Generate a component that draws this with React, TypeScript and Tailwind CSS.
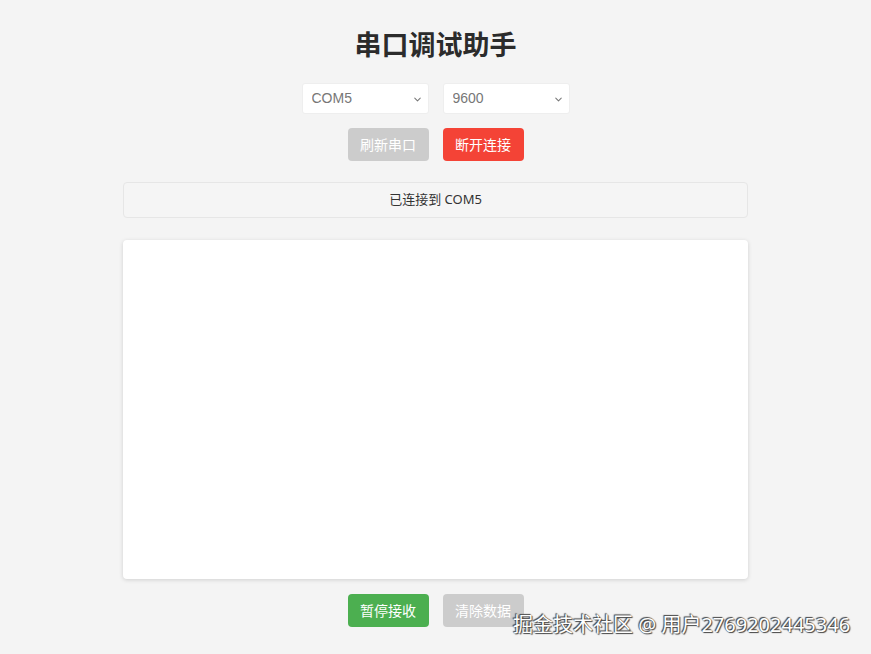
import { ChevronDown } from 'lucide-react';

const font = { fontFamily: '"Noto Sans", "Noto Sans CJK SC", sans-serif' };

function Select({ value, options }: { value: string; options: string[] }) {
  return (
    <div className="relative w-[127px] h-[31px]">
      <select
        defaultValue={value}
        className="appearance-none w-full h-full bg-white border border-[#eeeeee] rounded-[3px] pl-[9px] text-[14px] text-[#777777] outline-none"
        style={{ fontFamily: '"Liberation Sans", Arial, sans-serif' }}
      >
        {options.map((o) => (
          <option key={o}>{o}</option>
        ))}
      </select>
      <ChevronDown className="absolute right-[6px] top-[11px] w-[11px] h-[11px] text-[#777777] pointer-events-none" strokeWidth={2.2} />
    </div>
  );
}

function Btn({ label, color }: { label: string; color: string }) {
  return (
    <button className={`w-[81px] h-[33px] rounded-[4px] text-white text-[14px] ${color}`}>
      {label}
    </button>
  );
}

export default function App() {
  return (
    <div className="relative min-h-[654px] bg-[#f4f4f4] overflow-hidden" style={font}>
      <div className="w-[625px] mx-auto pt-[27px] flex flex-col items-center">
        <h1 className="text-[27px] leading-[36px] font-bold text-[#2b2b2b]">串口调试助手</h1>

        <div className="mt-[20px] flex gap-[14px]">
          <Select value="COM5" options={['COM5', 'COM3']} />
          <Select value="9600" options={['9600', '115200']} />
        </div>

        <div className="mt-[14px] flex gap-[14px]">
          <Btn label="刷新串口" color="bg-[#cccccc]" />
          <Btn label="断开连接" color="bg-[#f44336]" />
        </div>

        <div className="mt-[21px] w-full h-[36px] flex items-center justify-center bg-[#f5f5f5] border border-[#e6e6e6] rounded-[4px] text-[13px] text-[#333333]">
          已连接到 COM5
        </div>

        <div className="mt-[22px] w-full h-[339px] bg-white rounded-[4px] shadow-[0_1px_4px_rgba(0,0,0,0.15)]" />

        <div className="mt-[15px] flex gap-[14px]">
          <Btn label="暂停接收" color="bg-[#4caf50]" />
          <Btn label="清除数据" color="bg-[#cccccc]" />
        </div>
      </div>

      <div
        className="absolute left-[513px] top-[611px] text-[20px] leading-[28px] text-white whitespace-nowrap"
        style={{ ...font, textShadow: '0 0 1px #444, 1px 1px 1px #444, -1px -1px 1px #444' }}
      >
        掘金技术社区 @ 用户2769202445346
      </div>
    </div>
  );
}
